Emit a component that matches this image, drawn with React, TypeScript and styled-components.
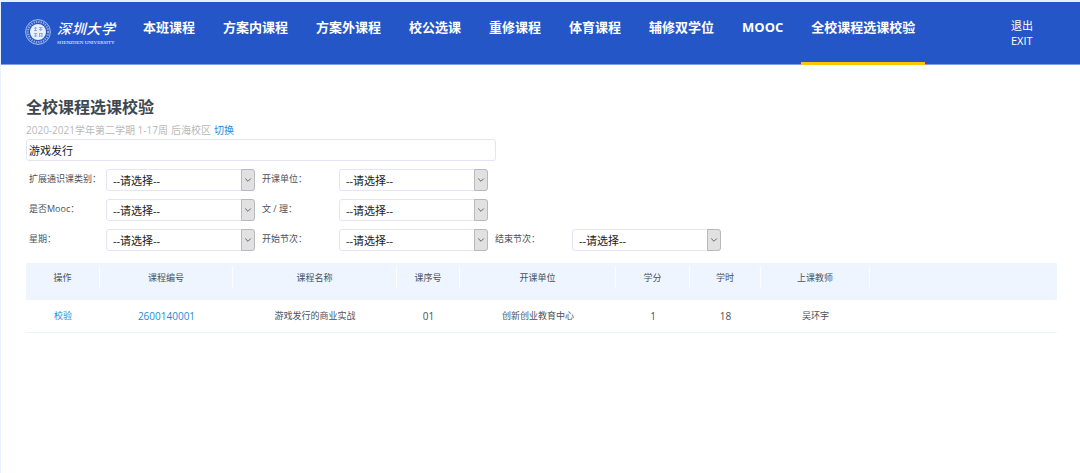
import React from "react";
import styled, { createGlobalStyle } from "styled-components";

const GlobalStyle = createGlobalStyle`
  *, *::before, *::after { box-sizing: border-box; }
  body {
    margin: 0;
    background: #fff;
    color: #4a515b;
    font-family: "Open Sans", "Noto Sans CJK SC", sans-serif;
    font-size: 9px;
    line-height: 14px;
  }
  button, input, select { font-family: inherit; }
`;

const Page = styled.div`
  min-height: 100vh;
  border-top: 2px solid #e6effc;
  border-left: 1px solid #e6effc;
`;

const Header = styled.header`
  display: flex;
  height: 63px;
  padding: 0 47px 0 24px;
  background: #2556c8;
  border-bottom: 1px solid #7f9fe2;
`;

const Brand = styled.a`
  display: flex;
  gap: 6px;
  width: 108px;
  padding-top: 14px;
  color: #fff;
  text-decoration: none;
`;

const BrandText = styled.span`
  display: flex;
  flex-direction: column;
  width: 58px;
`;

const BrandName = styled.span`
  display: flex;
  justify-content: space-between;
  padding-top: 3px;
  font-size: 14px;
  font-weight: 500;
  font-style: italic;
  line-height: 20px;
`;

const BrandLatin = styled.span`
  font-family: "Liberation Serif", serif;
  font-size: 5px;
  line-height: 8px;
  white-space: nowrap;
`;

const Nav = styled.nav`
  display: flex;
  gap: 8px;
`;

const NavLink = styled.a<{ $active?: boolean }>`
  height: 63px;
  padding: 15px 10px 0;
  border-bottom: 3px solid ${(p) => (p.$active ? "#fdc500" : "transparent")};
  color: #fff;
  font-size: 13px;
  font-weight: 700;
  line-height: 20px;
  text-decoration: none;
  white-space: nowrap;
`;

const ExitButton = styled.button`
  align-self: flex-start;
  margin: 16px 0 0 auto;
  padding: 0;
  border: 0;
  background: none;
  color: #fff;
  font-size: 11px;
  line-height: 15px;
  text-align: left;
`;

const Main = styled.main`
  padding: 30px 23px 0 25px;
`;

const Title = styled.h1`
  margin: 0;
  color: #3d4651;
  font-size: 16px;
  font-weight: 700;
  line-height: 24px;
`;

const Term = styled.p`
  display: flex;
  gap: 3px;
  margin: 4px 0 2px;
  color: #b9b9b9;
  font-size: 10px;
`;

const TextLink = styled.a`
  color: #1e88dc;
  text-decoration: none;
`;

const SearchInput = styled.input`
  display: block;
  width: 470px;
  max-width: 100%;
  height: 22px;
  padding: 0 2px;
  border: 1px solid #e3e4f4;
  border-radius: 3px;
  color: #222;
  font-size: 11px;
`;

const Filters = styled.form`
  display: flex;
  flex-direction: column;
  gap: 8px;
  padding: 8px 0 12px 3px;
`;

const FilterRow = styled.div`
  display: flex;
  gap: 7px;
`;

const Field = styled.div`
  display: flex;
`;

const FieldLabel = styled.label`
  width: 77px;
  line-height: 20px;
  white-space: nowrap;
`;

const SelectBox = styled.div`
  display: grid;
  grid-template-columns: 1fr 14px;
  width: 149px;
  height: 22px;
`;

const Select = styled.select`
  grid-area: 1 / 1 / 2 / 3;
  appearance: none;
  padding: 1px 16px 0 6px;
  border: 1px solid #e3e4f4;
  border-radius: 3px;
  background: #fff;
  color: #222;
  font-size: 11px;
`;

const SelectArrow = styled.span`
  grid-area: 1 / 2;
  display: flex;
  align-items: center;
  justify-content: center;
  border: 1px solid #b9b9bd;
  border-radius: 0 3px 3px 0;
  background: #e1e1e1;
  pointer-events: none;
`;

const Table = styled.table`
  width: 100%;
  border-collapse: collapse;
  table-layout: fixed;
  text-align: center;
`;

const HeadCell = styled.th`
  height: 37px;
  padding: 3px 0 0;
  background: #eef5fe;
  font-weight: 400;
  vertical-align: top;
`;

const HeadText = styled.span<{ $divider: boolean }>`
  display: block;
  height: 22px;
  border-right: 1px solid ${(p) => (p.$divider ? "#fafcff" : "transparent")};
  line-height: 24px;
`;

const Cell = styled.td<{ $numeric?: boolean }>`
  height: 32px;
  padding: 0;
  border-bottom: 1px solid #eef3f8;
  font-size: ${(p) => (p.$numeric ? "10px" : "9px")};
`;

const NAV = ["本班课程", "方案内课程", "方案外课程", "校公选课", "重修课程", "体育课程", "辅修双学位", "MOOC", "全校课程选课校验"];

const FILTERS = [
  ["扩展通识课类别：", "开课单位："],
  ["是否Mooc：", "文 / 理："],
  ["星期：", "开始节次：", "结束节次："],
];

const COLUMNS: { title: string; width?: number }[] = [
  { title: "操作", width: 74 },
  { title: "课程编号", width: 133 },
  { title: "课程名称", width: 164 },
  { title: "课序号", width: 63 },
  { title: "开课单位", width: 156 },
  { title: "学分", width: 74 },
  { title: "学时", width: 71 },
  { title: "上课教师", width: 109 },
  { title: "" },
];

const Col = styled.col<{ $width?: number }>`
  width: ${(p) => (p.$width ? `${p.$width}px` : "auto")};
`;

function Seal() {
  return (
    <svg width="26" height="32" viewBox="0 0 26 32" fill="none" aria-hidden="true">
      <circle cx="13" cy="16" r="12.4" stroke="#fff" strokeOpacity=".75" strokeWidth=".8" />
      <circle cx="13" cy="16" r="10.2" stroke="#fff" strokeOpacity=".5" strokeWidth="2.2" strokeDasharray="1.3 1.1" />
      <circle cx="13" cy="16" r="8" fill="#e9effb" />
      <path
        d="M9 12h3M10.500 11v4M9 14.500h3M14 11.500h3.500M14 13.500h3.500M15.700 11v4M9 17.500h3.200M9 20h3.200M10.600 17v4M14 17.500h3.500M14 20h3.500M14.500 17v4M17 17v4"
        stroke="#7d9be0"
        strokeWidth=".8"
      />
    </svg>
  );
}

function FilterField({ id, label }: { id: string; label: string }) {
  return (
    <Field>
      <FieldLabel htmlFor={id}>{label}</FieldLabel>
      <SelectBox>
        <Select id={id}>
          <option>--请选择--</option>
        </Select>
        <SelectArrow>
          <svg width="8" height="6" viewBox="0 0 8 6" fill="none" aria-hidden="true">
            <path d="M1.200 1.500 4 4.300 6.800 1.500" stroke="#666" strokeWidth="1" />
          </svg>
        </SelectArrow>
      </SelectBox>
    </Field>
  );
}

export default function App() {
  return (
    <>
      <GlobalStyle />
      <Page>
        <Header>
          <Brand href="#">
            <Seal />
            <BrandText>
              <BrandName>
                <span>深</span>
                <span>圳</span>
                <span>大</span>
                <span>学</span>
              </BrandName>
              <BrandLatin>SHENZHEN UNIVERSITY</BrandLatin>
            </BrandText>
          </Brand>
          <Nav>
            {NAV.map((name, i) => (
              <NavLink key={name} href="#" $active={i === NAV.length - 1}>
                {name}
              </NavLink>
            ))}
          </Nav>
          <ExitButton type="button">
            退出
            <br />
            EXIT
          </ExitButton>
        </Header>
        <Main>
          <Title>全校课程选课校验</Title>
          <Term>
            <span>2020-2021学年第二学期 1-17周</span>
            <span>后海校区</span>
            <TextLink href="#">切换</TextLink>
          </Term>
          <SearchInput type="text" aria-label="课程名称" defaultValue="游戏发行" />
          <Filters>
            {FILTERS.map((row, r) => (
              <FilterRow key={r}>
                {row.map((label, c) => (
                  <FilterField key={label} id={`filter-${r}-${c}`} label={label} />
                ))}
              </FilterRow>
            ))}
          </Filters>
          <Table>
            <colgroup>
              {COLUMNS.map((c, i) => (
                <Col key={i} $width={c.width} />
              ))}
            </colgroup>
            <thead>
              <tr>
                {COLUMNS.map((c, i) => (
                  <HeadCell key={i}>
                    <HeadText $divider={i < COLUMNS.length - 1}>{c.title}</HeadText>
                  </HeadCell>
                ))}
              </tr>
            </thead>
            <tbody>
              <tr>
                <Cell>
                  <TextLink href="#">校验</TextLink>
                </Cell>
                <Cell $numeric>
                  <TextLink href="#">2600140001</TextLink>
                </Cell>
                <Cell>游戏发行的商业实战</Cell>
                <Cell $numeric>01</Cell>
                <Cell>创新创业教育中心</Cell>
                <Cell $numeric>1</Cell>
                <Cell $numeric>18</Cell>
                <Cell>吴环宇</Cell>
                <Cell />
              </tr>
            </tbody>
          </Table>
        </Main>
      </Page>
    </>
  );
}
